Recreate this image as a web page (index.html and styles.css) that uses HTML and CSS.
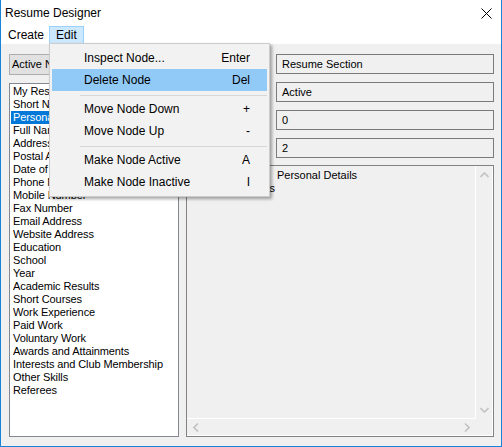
FILE: index.html
```html
<!DOCTYPE html>
<html lang="en">
<head>
    <meta charset="UTF-8">
    <title>Resume Designer</title>
    <link rel="stylesheet" href="styles.css">
</head>
<body>
    <div class="window">
        <!-- Title bar -->
        <div class="titlebar">
            <span class="title">Resume Designer</span>
            <svg class="close-btn" width="11" height="11" viewBox="0 0 11 11">
                <path d="M0.5 0.5 L10.5 10.5 M10.5 0.5 L0.5 10.5" stroke="#000" stroke-width="1" fill="none"/>
            </svg>
        </div>

        <!-- Menu bar -->
        <div class="menubar">
            <span class="menu-item first">Create</span>
            <span class="menu-item open">Edit
                <div class="dropdown">
                    <div class="drop-item"><span>Inspect Node...</span><span class="key">Enter</span></div>
                    <div class="drop-item active"><span>Delete Node</span><span class="key">Del</span></div>
                    <div class="drop-sep"></div>
                    <div class="drop-item"><span>Move Node Down</span><span class="key">+</span></div>
                    <div class="drop-item"><span>Move Node Up</span><span class="key">-</span></div>
                    <div class="drop-sep"></div>
                    <div class="drop-item"><span>Make Node Active</span><span class="key">A</span></div>
                    <div class="drop-item"><span>Make Node Inactive</span><span class="key">I</span></div>
                </div>
            </span>
        </div>

        <!-- Main area -->
        <div class="content">
            <div class="left-col">
                <div class="combo">Active Nodes</div>
                <ul class="listbox">
                    <li>My Resume</li>
                    <li>Short Notes</li>
                    <li class="selected">Personal Details</li>
                    <li>Full Name</li>
                    <li>Address</li>
                    <li>Postal Address</li>
                    <li>Date of Birth</li>
                    <li>Phone Number</li>
                    <li>Mobile Number</li>
                    <li>Fax Number</li>
                    <li>Email Address</li>
                    <li>Website Address</li>
                    <li>Education</li>
                    <li>School</li>
                    <li>Year</li>
                    <li>Academic Results</li>
                    <li>Short Courses</li>
                    <li>Work Experience</li>
                    <li>Paid Work</li>
                    <li>Voluntary Work</li>
                    <li>Awards and Attainments</li>
                    <li>Interests and Club Membership</li>
                    <li>Other Skills</li>
                    <li>Referees</li>
                </ul>
            </div>

            <div class="right-col">
                <div class="field-row"><span class="field-label"></span><div class="field">Resume Section</div></div>
                <div class="field-row"><span class="field-label"></span><div class="field">Active</div></div>
                <div class="field-row"><span class="field-label"></span><div class="field">0</div></div>
                <div class="field-row"><span class="field-label"></span><div class="field">2</div></div>

                <div class="memo">
                    <div class="memo-text">
                        <div class="memo-line">Heading&#9;Personal Details</div>
                        <div class="memo-line">Contains 8 Fields</div>
                    </div>
                    <div class="vscroll">
                        <svg width="9" height="6" viewBox="0 0 9 6"><path d="M0.5 5 L4.5 1 L8.5 5" stroke="#c2c2c2" stroke-width="1.6" fill="none"/></svg>
                        <svg width="9" height="6" viewBox="0 0 9 6"><path d="M0.5 1 L4.5 5 L8.5 1" stroke="#c2c2c2" stroke-width="1.6" fill="none"/></svg>
                    </div>
                    <div class="hscroll">
                        <svg width="6" height="9" viewBox="0 0 6 9"><path d="M5 0.5 L1 4.5 L5 8.5" stroke="#c2c2c2" stroke-width="1.6" fill="none"/></svg>
                        <svg width="6" height="9" viewBox="0 0 6 9"><path d="M1 0.5 L5 4.5 L1 8.5" stroke="#c2c2c2" stroke-width="1.6" fill="none"/></svg>
                    </div>
                    <div class="corner"></div>
                </div>
            </div>
        </div>
    </div>
</body>
</html>
```

FILE: styles.css
```css
/* Basic reset */
* {
    margin: 0;
    padding: 0;
    box-sizing: border-box;
}

body {
    font-family: "Liberation Sans", Arial, sans-serif;
    background: #fff;
}

/* Window frame */
.window {
    width: 502px;
    height: 447px;
    display: flex;
    flex-direction: column;
    border: 1px solid #1883d7;
    border-top: none;
    background: #fff;
}

/* Title bar */
.titlebar {
    height: 26px;
    display: flex;
    align-items: center;
    justify-content: space-between;
    padding: 0 9px 0 4px;
}

.title {
    font-size: 12px;
    color: #000;
}

.close-btn {
    display: block;
}

/* Menu bar */
.menubar {
    height: 18px;
    display: flex;
    font-size: 12px;
}

.menu-item {
    position: relative;
    height: 18px;
    line-height: 16px;
    padding: 0 6px;
    border: 1px solid transparent;
    color: #000;
}

.menu-item.first {
    padding: 0 4px 0 6px;
}

.menu-item.open {
    background: #cce8ff;
    border-color: #99d1ff;
}

/* Edit dropdown */
.dropdown {
    position: absolute;
    top: 16px;
    left: -1px;
    width: 221px;
    padding: 3px 2px;
    background: #f2f2f2;
    border: 1px solid #cccccc;
    box-shadow: 2px 2px 3px rgba(0, 0, 0, 0.35);
    z-index: 5;
}

.drop-item {
    height: 22px;
    line-height: 22px;
    display: flex;
    justify-content: space-between;
    padding: 0 17px 0 32px;
    white-space: nowrap;
}

.drop-item.active {
    background: #91c9f7;
}

.drop-sep {
    height: 7px;
    margin-left: 28px;
    padding-top: 4px;
}

.drop-sep::after {
    content: "";
    display: block;
    height: 1px;
    background: #d7d7d7;
}

/* Main area */
.content {
    flex: 1;
    display: flex;
    gap: 7px;
    padding: 10px 7px 9px 8px;
    background: #f0f0f0;
    font-size: 11px;
}

.left-col {
    width: 170px;
    display: flex;
    flex-direction: column;
    gap: 8px;
}

.combo {
    height: 21px;
    line-height: 19px;
    padding-left: 2px;
    background: #e1e1e1;
    border: 1px solid #adadad;
    white-space: nowrap;
    overflow: hidden;
}

.listbox {
    flex: 1;
    list-style: none;
    background: #fff;
    border: 1px solid #828790;
    padding: 1px 1px;
}

.listbox li {
    height: 13px;
    line-height: 13px;
    padding-left: 2px;
    color: #000;
    white-space: nowrap;
    letter-spacing: -0.1px;
}

.listbox li.selected {
    background: #0078d7;
    color: #fff;
}

/* Right column */
.right-col {
    flex: 1;
    display: flex;
    flex-direction: column;
    gap: 8px;
}

.field-row {
    display: flex;
    height: 20px;
}

.field-label {
    width: 90px;
}

.field {
    flex: 1;
    line-height: 18px;
    padding-left: 5px;
    border: 1px solid #7a7a7a;
    background: #f0f0f0;
}

.memo {
    flex: 1;
    margin-top: -1px;
    display: grid;
    grid-template-columns: 1fr 16px;
    grid-template-rows: 1fr 16px;
    padding: 0 1px 1px 0;
    border: 1px solid #828282;
    box-shadow: inset -1px -1px 0 #fff;
    background: #f0f0f0;
}

.memo-text {
    padding: 3px 3px;
    line-height: 13px;
    border-right: 1px solid #fff;
    border-bottom: 1px solid #fff;
    overflow: hidden;
}

.memo-line {
    white-space: pre;
    tab-size: 87px;
}

.vscroll {
    display: flex;
    flex-direction: column;
    justify-content: space-between;
    align-items: center;
    padding: 6px 0 6px;
}

.hscroll {
    display: flex;
    justify-content: space-between;
    align-items: center;
    padding: 0 6px;
}

.vscroll svg,
.hscroll svg {
    display: block;
}
```
